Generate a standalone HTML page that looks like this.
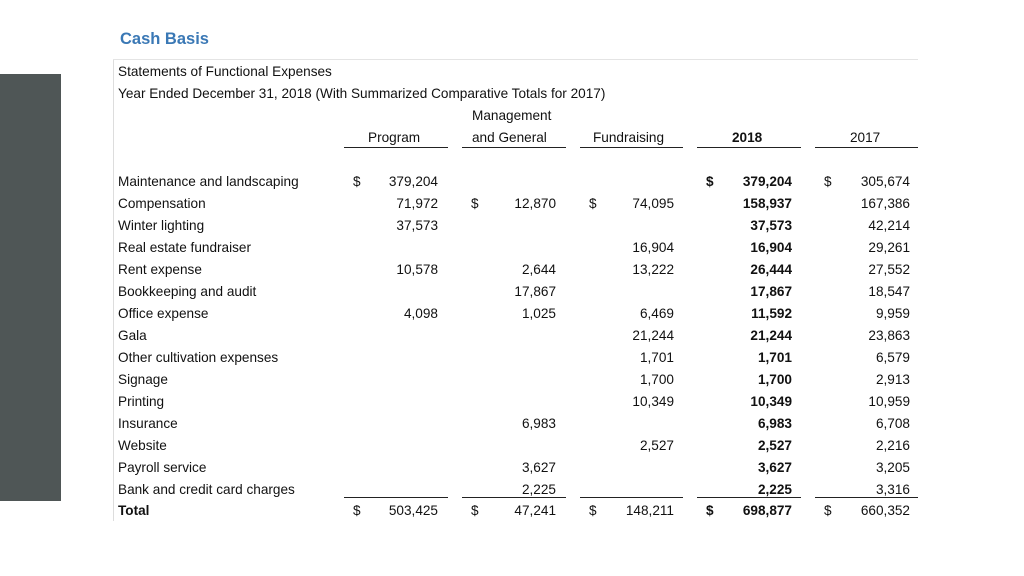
<!DOCTYPE html>
<html><head><meta charset="utf-8"><style>
html,body{margin:0;padding:0;background:#fff;}
body{width:1024px;height:576px;position:relative;overflow:hidden;font-family:"Liberation Sans",sans-serif;color:#111;}
.t{position:absolute;white-space:nowrap;font-size:13.6px;line-height:16px;}
.r{text-align:right;width:110px;}
.b{font-weight:bold;}
.ln{position:absolute;height:1.4px;background:#222;}
</style></head><body>
<div style="position:absolute;left:0;top:74px;width:61px;height:427px;background:#4f5656"></div>
<div class="t b" style="left:120px;top:31px;font-size:16.5px;color:#3a78b5">Cash Basis</div>
<div style="position:absolute;left:113px;top:59px;width:1px;height:462px;background:#ddd"></div>
<div style="position:absolute;left:113px;top:59px;width:805px;height:1px;background:#e4e4e4"></div>
<div class="t" style="left:118px;top:64px">Statements of Functional Expenses</div>
<div class="t" style="left:118px;top:86px">Year Ended December 31, 2018 (With Summarized Comparative Totals for 2017)</div>
<div class="t" style="left:472px;top:108px">Management</div>
<div class="t" style="left:368px;top:130px">Program</div>
<div class="t" style="left:472px;top:130px">and General</div>
<div class="t" style="left:593px;top:130px">Fundraising</div>
<div class="t b" style="left:732px;top:130px">2018</div>
<div class="t" style="left:850px;top:130px">2017</div>
<div class="ln" style="left:344px;top:147px;width:104px"></div>
<div class="ln" style="left:462px;top:147px;width:104px"></div>
<div class="ln" style="left:580px;top:147px;width:103px"></div>
<div class="ln" style="left:697px;top:147px;width:104px"></div>
<div class="ln" style="left:815px;top:147px;width:103px"></div>
<div class="ln" style="left:344px;top:497px;width:104px"></div>
<div class="ln" style="left:462px;top:497px;width:104px"></div>
<div class="ln" style="left:580px;top:497px;width:103px"></div>
<div class="ln" style="left:697px;top:497px;width:104px"></div>
<div class="ln" style="left:815px;top:497px;width:103px"></div>

<!-- labels -->
<div class="t" style="left:118px;top:174px">Maintenance and landscaping</div>
<div class="t" style="left:118px;top:196px">Compensation</div>
<div class="t" style="left:118px;top:218px">Winter lighting</div>
<div class="t" style="left:118px;top:240px">Real estate fundraiser</div>
<div class="t" style="left:118px;top:262px">Rent expense</div>
<div class="t" style="left:118px;top:284px">Bookkeeping and audit</div>
<div class="t" style="left:118px;top:306px">Office expense</div>
<div class="t" style="left:118px;top:328px">Gala</div>
<div class="t" style="left:118px;top:350px">Other cultivation expenses</div>
<div class="t" style="left:118px;top:372px">Signage</div>
<div class="t" style="left:118px;top:394px">Printing</div>
<div class="t" style="left:118px;top:416px">Insurance</div>
<div class="t" style="left:118px;top:438px">Website</div>
<div class="t" style="left:118px;top:460px">Payroll service</div>
<div class="t" style="left:118px;top:482px">Bank and credit card charges</div>
<div class="t b" style="left:118px;top:503px">Total</div>

<!-- dollar signs -->
<div class="t" style="left:353px;top:174px">$</div>
<div class="t b" style="left:706px;top:174px">$</div>
<div class="t" style="left:824px;top:174px">$</div>
<div class="t" style="left:471px;top:196px">$</div>
<div class="t" style="left:589px;top:196px">$</div>
<div class="t" style="left:353px;top:503px">$</div>
<div class="t" style="left:471px;top:503px">$</div>
<div class="t" style="left:589px;top:503px">$</div>
<div class="t b" style="left:706px;top:503px">$</div>
<div class="t" style="left:824px;top:503px">$</div>

<!-- Program col (right 438) -->
<div class="t r" style="left:328px;top:174px">379,204</div>
<div class="t r" style="left:328px;top:196px">71,972</div>
<div class="t r" style="left:328px;top:218px">37,573</div>
<div class="t r" style="left:328px;top:262px">10,578</div>
<div class="t r" style="left:328px;top:306px">4,098</div>
<div class="t r" style="left:328px;top:503px">503,425</div>
<!-- Mgmt (right 556) -->
<div class="t r" style="left:446px;top:196px">12,870</div>
<div class="t r" style="left:446px;top:262px">2,644</div>
<div class="t r" style="left:446px;top:284px">17,867</div>
<div class="t r" style="left:446px;top:306px">1,025</div>
<div class="t r" style="left:446px;top:416px">6,983</div>
<div class="t r" style="left:446px;top:460px">3,627</div>
<div class="t r" style="left:446px;top:482px">2,225</div>
<div class="t r" style="left:446px;top:503px">47,241</div>
<!-- Fundraising (right 674) -->
<div class="t r" style="left:564px;top:196px">74,095</div>
<div class="t r" style="left:564px;top:240px">16,904</div>
<div class="t r" style="left:564px;top:262px">13,222</div>
<div class="t r" style="left:564px;top:306px">6,469</div>
<div class="t r" style="left:564px;top:328px">21,244</div>
<div class="t r" style="left:564px;top:350px">1,701</div>
<div class="t r" style="left:564px;top:372px">1,700</div>
<div class="t r" style="left:564px;top:394px">10,349</div>
<div class="t r" style="left:564px;top:438px">2,527</div>
<div class="t r" style="left:564px;top:503px">148,211</div>
<!-- 2018 (right 792) bold -->
<div class="t r b" style="left:682px;top:174px">379,204</div>
<div class="t r b" style="left:682px;top:196px">158,937</div>
<div class="t r b" style="left:682px;top:218px">37,573</div>
<div class="t r b" style="left:682px;top:240px">16,904</div>
<div class="t r b" style="left:682px;top:262px">26,444</div>
<div class="t r b" style="left:682px;top:284px">17,867</div>
<div class="t r b" style="left:682px;top:306px">11,592</div>
<div class="t r b" style="left:682px;top:328px">21,244</div>
<div class="t r b" style="left:682px;top:350px">1,701</div>
<div class="t r b" style="left:682px;top:372px">1,700</div>
<div class="t r b" style="left:682px;top:394px">10,349</div>
<div class="t r b" style="left:682px;top:416px">6,983</div>
<div class="t r b" style="left:682px;top:438px">2,527</div>
<div class="t r b" style="left:682px;top:460px">3,627</div>
<div class="t r b" style="left:682px;top:482px">2,225</div>
<div class="t r b" style="left:682px;top:503px">698,877</div>
<!-- 2017 (right 910) -->
<div class="t r" style="left:800px;top:174px">305,674</div>
<div class="t r" style="left:800px;top:196px">167,386</div>
<div class="t r" style="left:800px;top:218px">42,214</div>
<div class="t r" style="left:800px;top:240px">29,261</div>
<div class="t r" style="left:800px;top:262px">27,552</div>
<div class="t r" style="left:800px;top:284px">18,547</div>
<div class="t r" style="left:800px;top:306px">9,959</div>
<div class="t r" style="left:800px;top:328px">23,863</div>
<div class="t r" style="left:800px;top:350px">6,579</div>
<div class="t r" style="left:800px;top:372px">2,913</div>
<div class="t r" style="left:800px;top:394px">10,959</div>
<div class="t r" style="left:800px;top:416px">6,708</div>
<div class="t r" style="left:800px;top:438px">2,216</div>
<div class="t r" style="left:800px;top:460px">3,205</div>
<div class="t r" style="left:800px;top:482px">3,316</div>
<div class="t r" style="left:800px;top:503px">660,352</div>
</body></html>
